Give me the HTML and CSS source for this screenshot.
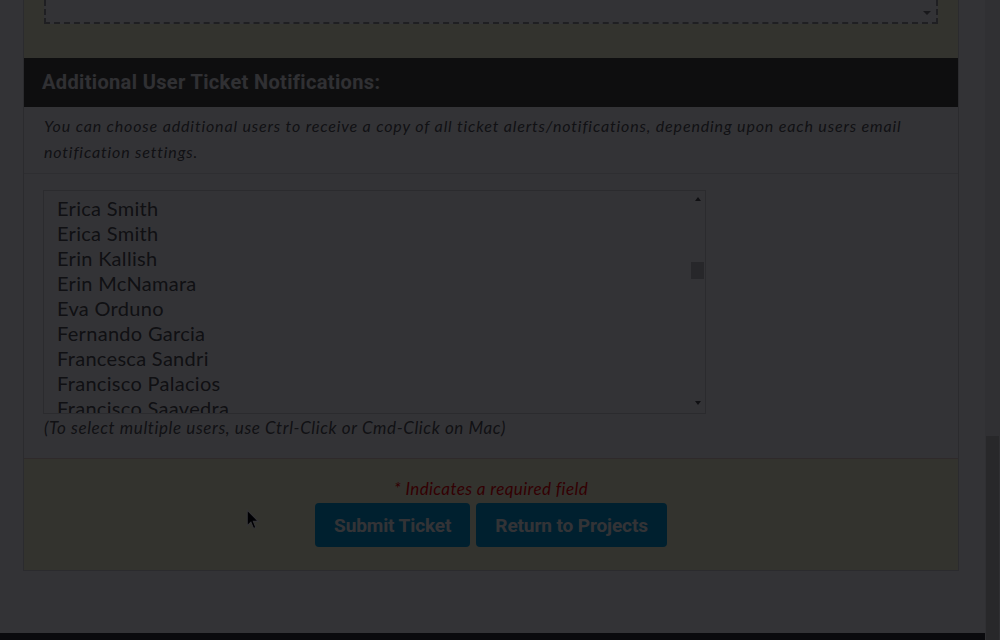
FILE: index.html
```html
<!doctype html>

<html lang="en">
  <head>
    <title>New Ticket</title>
    <meta charset="utf-8" />
    <link rel="stylesheet" href="styles.css">
  </head>

  <body>
    <div id="page">
      <div id="main">
        <div id="ticket-form">

          <!-- attachments box (scrolled off the top) -->
          <div class="attach-section">
            <div class="drop-box"><span class="drop-arrow"></span></div>
          </div>

          <h2 class="section-title">Additional User Ticket Notifications:</h2>
          <p class="section-note">You can choose additional users to receive a copy of all ticket alerts/notifications, depending upon each users email notification settings.</p>

          <div class="user-picker">
            <div class="user-list">
              <div class="user-options">
                <div class="user-option">Erica Smith</div>
                <div class="user-option">Erica Smith</div>
                <div class="user-option">Erin Kallish</div>
                <div class="user-option">Erin McNamara</div>
                <div class="user-option">Eva Orduno</div>
                <div class="user-option">Fernando Garcia</div>
                <div class="user-option">Francesca Sandri</div>
                <div class="user-option">Francisco Palacios</div>
                <div class="user-option">Francisco Saavedra</div>
              </div>
              <div class="list-scroll">
                <span class="arrow-up"></span>
                <span class="list-thumb"></span>
                <span class="arrow-down"></span>
              </div>
            </div>
            <p class="picker-help">(To select multiple users, use Ctrl-Click or Cmd-Click on Mac)</p>
          </div>

          <div class="form-actions">
            <p class="required-note">* Indicates a required field</p>
            <div class="buttons">
              <button class="btn">Submit Ticket</button>
              <button class="btn">Return to Projects</button>
            </div>
          </div>

        </div>

        <div id="footer"></div>
      </div>

      <div id="page-scroll"><span class="page-thumb"></span></div>
    </div>

    <svg class="mouse" width="14" height="21" viewBox="0 0 13 20">
      <path d="M1 1 L1 16 L4.5 12.5 L7 18.5 L9.2 17.6 L6.8 11.8 L11.5 11.8 Z" fill="#000" stroke="#fff" stroke-width="1"/>
    </svg>

    <div id="backdrop"></div>
  </body>
</html>
```

FILE: styles.css
```css
*{
  margin: 0;
  padding: 0;
  box-sizing: border-box;
}

body{
  font-family: 'Lato', sans-serif;
  background-color: white;
  color: #555555;
  overflow: hidden;
}

#page{
  display: flex;
  height: 640px;
}

#main{
  flex: 1;
}

#ticket-form{
  width: 936px;
  margin-left: 23px;
  background-color: white;
  border: 1px solid #d4d4d4;
  border-top: none;
}

/* top section, cut off */
.attach-section{
  background-color: #fffdd5;
  padding: 0 20px 34px 20px;
}

.drop-box{
  height: 24px;
  background-color: white;
  border: 2px dashed #999999;
  border-top: none;
  display: flex;
  justify-content: flex-end;
  padding: 11px 5px 0 0;
}

.drop-arrow{
  width: 0;
  height: 0;
  border-left: 4px solid transparent;
  border-right: 4px solid transparent;
  border-top: 4px solid #777777;
}

.section-title{
  background-color: #45453d;
  color: #eeeeee;
  font-family: 'Roboto', sans-serif;
  font-weight: 700;
  font-size: 20px;
  letter-spacing: 0.35px;
  height: 49px;
  line-height: 49px;
  padding: 0 18px;
}

.section-note{
  font-style: italic;
  font-size: 16px;
  letter-spacing: 0.85px;
  line-height: 26px;
  padding: 6px 20px 8px 20px;
  border-bottom: 1px solid #e4e4e4;
}

.user-picker{
  padding: 16px 19px 20px 19px;
}

.user-list{
  width: 663px;
  height: 224px;
  border: 1px solid #d8d8d8;
  display: flex;
}

.user-options{
  flex: 1;
  overflow: hidden;
  padding: 5px 0 0 13px;
  font-size: 20px;
  letter-spacing: 0.3px;
  line-height: 25px;
  color: #505050;
}

.list-scroll{
  width: 15px;
  display: flex;
  flex-direction: column;
  align-items: center;
}

.arrow-up{
  width: 0;
  height: 0;
  margin-top: 6px;
  border-left: 3.5px solid transparent;
  border-right: 3.5px solid transparent;
  border-bottom: 4px solid #505050;
}

.list-thumb{
  width: 13px;
  height: 17px;
  margin-top: 61px;
  background-color: #c1c1c1;
}

.arrow-down{
  width: 0;
  height: 0;
  margin-top: auto;
  margin-bottom: 8px;
  border-left: 3.5px solid transparent;
  border-right: 3.5px solid transparent;
  border-top: 4px solid #505050;
}

.picker-help{
  font-style: italic;
  font-size: 17px;
  letter-spacing: 0.6px;
  line-height: 20px;
  margin-top: 4px;
  padding-left: 1px;
}

.form-actions{
  background-color: #fffdd5;
  border-top: 1px solid #ecd2c6;
  padding: 20px 0 23px 0;
  text-align: center;
}

.required-note{
  color: #ff0000;
  font-style: italic;
  font-size: 17px;
  letter-spacing: 0.4px;
  line-height: 20px;
}

.buttons{
  margin-top: 4px;
  display: flex;
  justify-content: center;
  gap: 6px;
}

.btn{
  height: 44px;
  padding: 0 19px;
  border: none;
  border-radius: 4px;
  background-color: #00a0db;
  color: white;
  font-family: 'Roboto', sans-serif;
  font-weight: 700;
  font-size: 19px;
  letter-spacing: -0.1px;
}

#footer{
  margin-top: 62px;
  height: 100px;
  background-color: #333333;
}

#page-scroll{
  width: 15px;
  background-color: #f1f1f1;
  display: flex;
  flex-direction: column;
  justify-content: flex-end;
  align-items: center;
}

.page-thumb{
  width: 13px;
  height: 204px;
  background-color: #c8c8c4;
}

/* things lying over the page */
.mouse{
  position: absolute;
  left: 246px;
  top: 509px;
}

#backdrop{
  position: fixed;
  top: 0;
  left: 0;
  right: 0;
  bottom: 0;
  background-color: rgba(0, 0, 4, 0.8);
}
```
